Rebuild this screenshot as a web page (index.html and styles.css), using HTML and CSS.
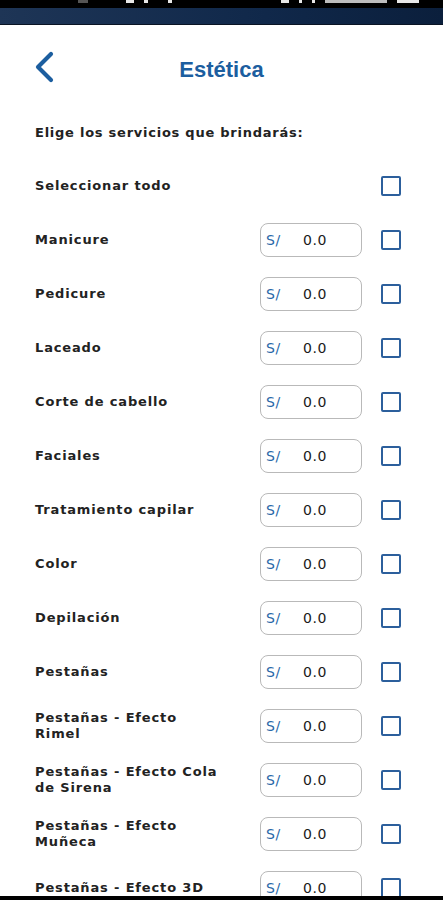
FILE: index.html
```html
<!DOCTYPE html>
<html lang="es">
<head>
<meta charset="utf-8">
<title>Estética</title>
<link rel="stylesheet" href="styles.css">
</head>
<body>
<div class="status">
  <div class="status-top">
    <span class="si si-a"></span>
    <span class="si si-b"></span>
    <span class="si si-c"></span>
    <span class="si si-d"></span>
    <span class="spacer"></span>
    <span class="si si-e"></span>
    <span class="si si-f"></span>
    <span class="si si-g"></span>
    <span class="si si-h"></span>
    <span class="si si-i"></span>
  </div>
  <div class="status-band"></div>
</div>
<header class="header">
  <svg class="back" width="20" height="34" viewBox="0 0 20 34">
    <path d="M16 3 L3 16 L16 29" fill="none" stroke="#1c5e9f" stroke-width="4.2" stroke-linecap="round" stroke-linejoin="round"/>
  </svg>
  <h1 class="title">Estética</h1>
</header>
<main class="content">
  <p class="intro">Elige los servicios que brindarás:</p>
  <ul class="list">
    <li class="row"><span class="label">Seleccionar todo</span><span class="check"></span></li>
    <li class="row"><span class="label">Manicure</span><span class="price"><span class="cur">S/</span><span class="val">0.0</span></span><span class="check"></span></li>
    <li class="row"><span class="label">Pedicure</span><span class="price"><span class="cur">S/</span><span class="val">0.0</span></span><span class="check"></span></li>
    <li class="row"><span class="label">Laceado</span><span class="price"><span class="cur">S/</span><span class="val">0.0</span></span><span class="check"></span></li>
    <li class="row"><span class="label">Corte de cabello</span><span class="price"><span class="cur">S/</span><span class="val">0.0</span></span><span class="check"></span></li>
    <li class="row"><span class="label">Faciales</span><span class="price"><span class="cur">S/</span><span class="val">0.0</span></span><span class="check"></span></li>
    <li class="row"><span class="label">Tratamiento capilar</span><span class="price"><span class="cur">S/</span><span class="val">0.0</span></span><span class="check"></span></li>
    <li class="row"><span class="label">Color</span><span class="price"><span class="cur">S/</span><span class="val">0.0</span></span><span class="check"></span></li>
    <li class="row"><span class="label">Depilación</span><span class="price"><span class="cur">S/</span><span class="val">0.0</span></span><span class="check"></span></li>
    <li class="row"><span class="label">Pestañas</span><span class="price"><span class="cur">S/</span><span class="val">0.0</span></span><span class="check"></span></li>
    <li class="row"><span class="label">Pestañas - Efecto Rimel</span><span class="price"><span class="cur">S/</span><span class="val">0.0</span></span><span class="check"></span></li>
    <li class="row"><span class="label">Pestañas - Efecto Cola de Sirena</span><span class="price"><span class="cur">S/</span><span class="val">0.0</span></span><span class="check"></span></li>
    <li class="row"><span class="label">Pestañas - Efecto Muñeca</span><span class="price"><span class="cur">S/</span><span class="val">0.0</span></span><span class="check"></span></li>
    <li class="row"><span class="label">Pestañas - Efecto 3D</span><span class="price"><span class="cur">S/</span><span class="val">0.0</span></span><span class="check"></span></li>
  </ul>
</main>
<div class="navbar"></div>
</body>
</html>
```
FILE: styles.css
```css
* { box-sizing: border-box; }
html, body { margin: 0; padding: 0; background: #ffffff; }
body {
  width: 443px;
  height: 900px;
  overflow: hidden;
  font-family: "DejaVu Sans", "Liberation Sans", sans-serif;
  color: #1a1a1a;
}
.status { display: flex; flex-direction: column; }
.status-top {
  height: 8px;
  background: #000;
  display: flex;
  align-items: flex-start;
  padding: 0 24px 0 78px;
  gap: 10px;
}
.si { display: block; height: 3px; background: #e8e8e8; }
.si-a { width: 10px; background: #555; }
.si-b { width: 8px; margin-left: 28px; }
.si-c { width: 4px; }
.si-d { width: 4px; margin-left: 10px; }
.spacer { flex: 1; }
.si-e { width: 8px; }
.si-f { width: 3px; }
.si-g { width: 3px; }
.si-h { width: 62px; background: #bdbdbd; }
.si-i { width: 22px; }
.status-band {
  height: 17px;
  background: linear-gradient(90deg, #1e3556 0%, #10284a 60%, #0b1f3c 100%);
  border-bottom: 1px solid #0a1424;
}
.header {
  height: 90px;
  display: flex;
  align-items: center;
  justify-content: center;
  padding: 0 35px;
}
.back { display: block; flex: none; margin-right: auto; margin-top: -4px; }
.title {
  margin: 0 auto 0 0;
  transform: translateX(-10px);
  font-family: "Liberation Sans", Arial, sans-serif;
  font-weight: bold;
  font-size: 22px;
  color: #1c5e9f;
}
.content { padding: 0 42px 0 35px; }
.intro {
  margin: 10px 0 0;
  line-height: 16px;
  font-size: 13px;
  font-weight: bold;
  letter-spacing: 0.75px;
  color: #222;
}
.list {
  list-style: none;
  margin: 18px 0 0;
  padding: 0;
}
.row {
  height: 54px;
  display: flex;
  align-items: center;
}
.label {
  flex: 1;
  max-width: 188px;
  margin-right: auto;
  font-size: 13px;
  font-weight: bold;
  line-height: 16px;
  letter-spacing: 0.85px;
  color: #222;
}
.price {
  flex: none;
  width: 102px;
  height: 34px;
  margin-left: auto;
  border: 1px solid #b9b9b9;
  border-radius: 8px;
  display: flex;
  align-items: center;
  padding-left: 5px;
  font-size: 14px;
  letter-spacing: 0.6px;
}
.cur { color: #2a68a8; width: 37px; }
.val { color: #1a1a1a; }
.check {
  flex: none;
  width: 20px;
  height: 20px;
  margin-left: 19px;
  border: 2px solid #2c5f9c;
  border-radius: 2px;
}
.row:first-child .check { margin-left: auto; }
.navbar {
  position: fixed;
  left: 0;
  right: 0;
  bottom: 0;
  height: 4px;
  background: #000;
}
```
